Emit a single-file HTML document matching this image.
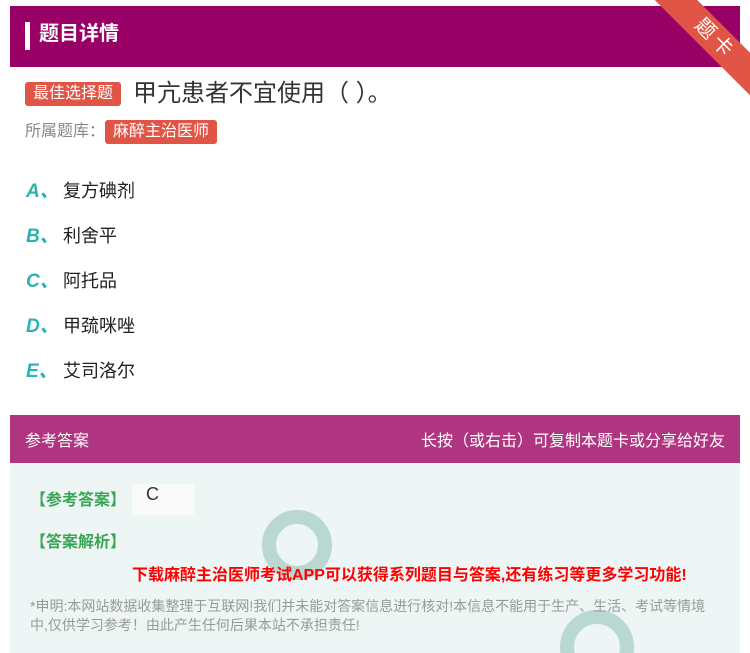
<!DOCTYPE html>
<html><head><meta charset="utf-8"><style>
html,body{margin:0;padding:0}
#w{width:750px;height:653px;background:#fff;font-family:"Liberation Sans","Noto Sans CJK SC",sans-serif;position:relative;overflow:hidden}
.a{position:absolute;white-space:nowrap}
.hd{left:10px;top:6px;width:730px;height:61px;background:#990066}
.tag{background:#e05545;color:#fff;border-radius:3px;font-size:16px;padding:0 8px;line-height:24px}
.opt{left:26px;font-size:18px;color:#222}
.opt b{color:#2ab3b0;font-style:italic;font-size:19px;display:inline-block;width:37px}
</style></head><body><div id="w">
<div class="a hd"></div>
<div class="a" style="left:25px;top:22px;width:5px;height:28px;background:#fff"></div>
<div class="a" style="left:39px;top:20px;color:#fff;font-size:20px;font-weight:bold;line-height:28px">题目详情</div>
<div class="a" style="left:650px;top:-4px;width:110px;height:100px;overflow:hidden">
<div style="position:absolute;left:-10px;top:28px;width:150px;height:30px;background:#e05545;transform:rotate(45deg);color:#fff;font-size:20px;text-align:center;line-height:30px;letter-spacing:4px">题卡</div></div>
<div class="a tag" style="left:25px;top:82px">最佳选择题</div>
<div class="a" style="left:133px;top:79px;font-size:24px;color:#333;line-height:30px">甲亢患者不宜使用（ ）。</div>
<div class="a" style="left:25px;top:121px;font-size:16px;color:#888;line-height:22px">所属题库：</div>
<div class="a tag" style="left:105px;top:120px">麻醉主治医师</div>
<div class="a opt" style="top:176px"><b>A、</b>复方碘剂</div>
<div class="a opt" style="top:221px"><b>B、</b>利舍平</div>
<div class="a opt" style="top:266px"><b>C、</b>阿托品</div>
<div class="a opt" style="top:311px"><b>D、</b>甲巯咪唑</div>
<div class="a opt" style="top:356px"><b>E、</b>艾司洛尔</div>
<div class="a" style="left:10px;top:415px;width:730px;height:48px;background:#b03580"></div>
<div class="a" style="left:25px;top:427px;color:#fff;font-size:16px">参考答案</div>
<div class="a" style="right:25px;top:427px;color:#fff;font-size:16px">长按（或右击）可复制本题卡或分享给好友</div>
<div class="a" style="left:10px;top:463px;width:730px;height:190px;background:#eef6f5"></div>
<div class="a" style="left:262px;top:510px;width:70px;height:70px;border-radius:50%;border:14px solid #b9d8d2;box-sizing:border-box"></div>
<div class="a" style="left:560px;top:610px;width:74px;height:74px;border-radius:50%;border:14px solid #b9d8d2;box-sizing:border-box"></div>
<div class="a" style="left:30px;top:486px;color:#3aa655;font-size:16px;font-weight:bold">【参考答案】</div>
<div class="a" style="left:132px;top:484px;width:62px;height:31px;background:#fafafa;font-size:18px;color:#333;padding-left:14px;box-sizing:border-box">C</div>
<div class="a" style="left:30px;top:528px;color:#3aa655;font-size:16px;font-weight:bold">【答案解析】</div>
<div class="a" style="left:132px;top:561px;color:#f00;font-size:16px;font-weight:bold">下载麻醉主治医师考试APP可以获得系列题目与答案,还有练习等更多学习功能!</div>
<div class="a" style="left:30px;top:597px;color:#999;font-size:14px;line-height:19px;white-space:normal;width:690px">*申明:本网站数据收集整理于互联网!我们并未能对答案信息进行核对!本信息不能用于生产、生活、考试等情境中,仅供学习参考！由此产生任何后果本站不承担责任!</div>
</div></body></html>
